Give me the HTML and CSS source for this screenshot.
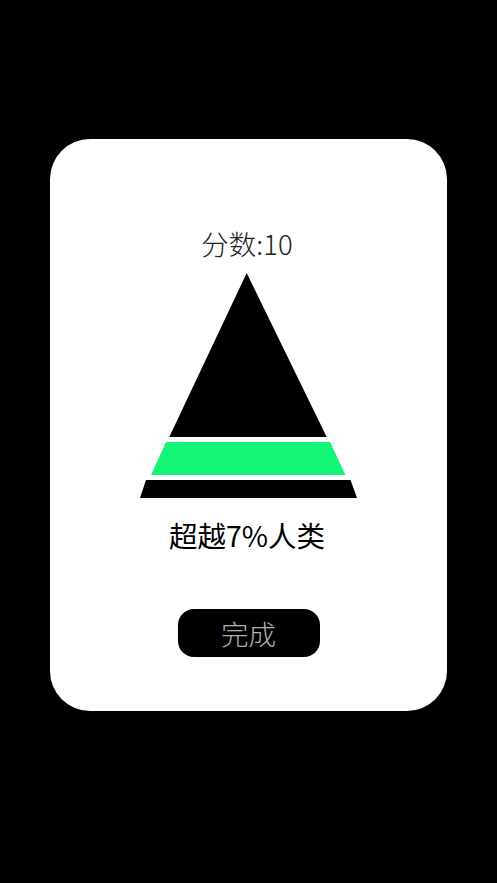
FILE: index.html
```html
<!DOCTYPE html>
<html lang="zh">
<head>
<meta charset="utf-8">
<link rel="stylesheet" href="styles.css">
</head>
<body>
<div class="card">
  <div class="score">分数:10</div>
  <svg class="pyramid" width="217" height="225" viewBox="0 0 217 225">
    <polygon points="106.7,0 186.7,164 29.3,164" fill="#000"/>
    <polygon points="26,169 190,169 205.5,202 11,202" fill="#12f576"/>
    <polygon points="6,207 210.5,207 217,225 0,225" fill="#000"/>
  </svg>
  <div class="beat">超越7%人类</div>
  <div class="done">完成</div>
</div>
</body>
</html>
```
FILE: styles.css
```css
html, body {
  margin: 0;
  padding: 0;
  background: #000;
  width: 497px;
  height: 883px;
  overflow: hidden;
  font-family: "Noto Sans CJK SC", "Noto Sans", sans-serif;
}
.card {
  margin: 139px 0 0 50px;
  width: 397px;
  height: 572px;
  background: #fff;
  border-radius: 40px;
  display: flex;
  flex-direction: column;
  align-items: center;
  box-sizing: border-box;
  padding-top: 88px;
}
.score {
  font-size: 27.5px;
  line-height: 32px;
  font-weight: 300;
  color: #222;
  margin-left: -3px;
}
.pyramid {
  display: block;
  margin-top: 14px;
}
.beat {
  margin-top: 20px;
  font-size: 28.5px;
  line-height: 34px;
  font-weight: 400;
  color: #000;
  margin-left: -3px;
}
.done {
  margin-top: 57px;
  width: 142px;
  height: 48px;
  border-radius: 16px;
  background: #000;
  color: #b0b0b0;
  font-size: 27.5px;
  font-weight: 300;
  display: flex;
  align-items: center;
  justify-content: center;
}
```
